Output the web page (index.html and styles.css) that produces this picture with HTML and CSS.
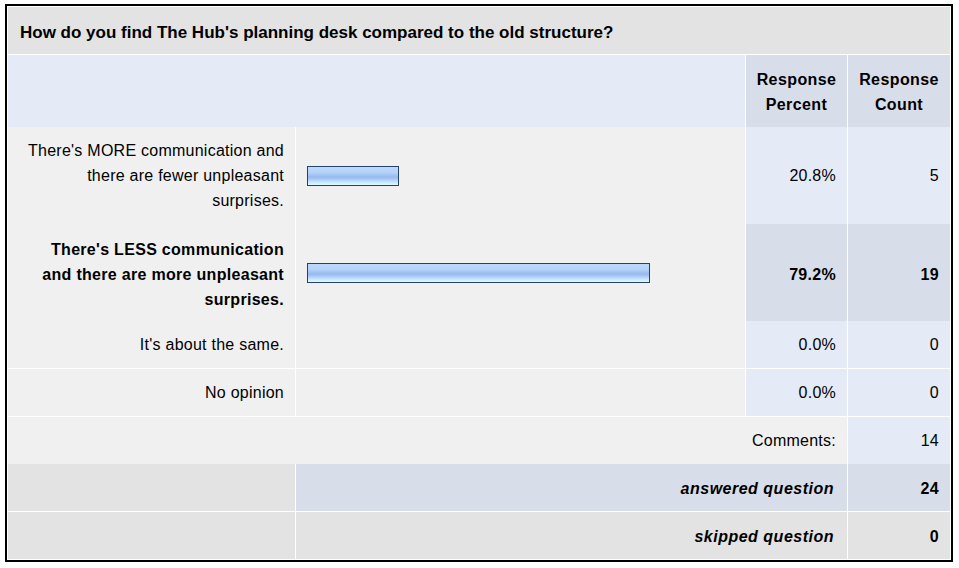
FILE: index.html
```html
<!DOCTYPE html>
<html>
<head>
<meta charset="utf-8">
<link rel="stylesheet" href="styles.css">
</head>
<body>
<div class="survey">
  <div class="title">How do you find The Hub's planning desk compared to the old structure?</div>
  <div class="row sep">
    <div class="cell span2 blue"></div>
    <div class="cell hcol dark">Response Percent</div>
    <div class="cell hcol dark">Response Count</div>
  </div>
  <div class="row">
    <div class="cell label">There's MORE communication and there are fewer unpleasant surprises.</div>
    <div class="cell barcell"><div class="bar" style="width:92px"></div></div>
    <div class="cell num blue">20.8%</div>
    <div class="cell num blue">5</div>
  </div>
  <div class="row strong">
    <div class="cell label">There's LESS communication and there are more unpleasant surprises.</div>
    <div class="cell barcell"><div class="bar" style="width:343px"></div></div>
    <div class="cell num dark">79.2%</div>
    <div class="cell num dark">19</div>
  </div>
  <div class="row">
    <div class="cell label">It's about the same.</div>
    <div class="cell barcell"></div>
    <div class="cell num blue">0.0%</div>
    <div class="cell num blue">0</div>
  </div>
  <div class="row sep">
    <div class="cell label">No opinion</div>
    <div class="cell barcell"></div>
    <div class="cell num blue">0.0%</div>
    <div class="cell num blue">0</div>
  </div>
  <div class="row sep">
    <div class="cell span3 num light">Comments:</div>
    <div class="cell num blue">14</div>
  </div>
  <div class="row low">
    <div class="cell grey"></div>
    <div class="cell span2 num dark summary">answered question</div>
    <div class="cell num dark bold">24</div>
  </div>
  <div class="row sep low">
    <div class="cell grey"></div>
    <div class="cell span2 num grey summary">skipped question</div>
    <div class="cell num grey bold">0</div>
  </div>
</div>
</body>
</html>
```

FILE: styles.css
```css
html, body {
  margin: 0;
  padding: 0;
  background: #ffffff;
}

body {
  font-family: "Liberation Sans", Arial, sans-serif;
  font-size: 16px;
  line-height: 25px;
  color: #000000;
  letter-spacing: 0.25px;
}

.survey {
  width: 942px;
  margin: 4px 0 0 5px;
  border: 2px solid #000000;
  padding: 1px;
  background: #ffffff;
  display: flex;
  flex-direction: column;
}

.title {
  background: #e3e3e3;
  font-size: 17px;
  font-weight: bold;
  letter-spacing: 0;
  padding: 13px 12px 9px;
  height: 25px;
}

.row {
  display: grid;
  grid-template-columns: 287px 449px 101px 102px;
  column-gap: 1px;
  background: #ffffff;
}

.row.sep {
  margin-top: 1px;
}

.cell {
  padding: 11px 11px;
}

.span2 {
  grid-column: span 2;
}

.span3 {
  grid-column: span 3;
}

.blue {
  background: #e5ebf6;
}

.dark {
  background: #d8dee9;
}

.light {
  background: #f0f0f0;
}

.grey {
  background: #e3e3e3;
}

.hcol {
  font-weight: bold;
  text-align: center;
  letter-spacing: 0.4px;
  padding: 12px 8px 10px;
}

.label {
  background: #f0f0f0;
  text-align: right;
  padding-left: 16px;
}

.strong .label,
.strong .num,
.bold {
  font-weight: bold;
  letter-spacing: 0.3px;
}

.strong .cell {
  padding-top: 13px;
  padding-bottom: 9px;
}

.low .cell {
  padding-top: 12px;
  padding-bottom: 10px;
}

.barcell {
  background: #f0f0f0;
  display: flex;
  align-items: center;
}

.bar {
  box-sizing: border-box;
  height: 20px;
  border: 1px solid #26426b;
  background: linear-gradient(to bottom,
    #bdd9fc 0%,
    #b5d2fa 30%,
    #9fc0f1 48%,
    #97b9ee 56%,
    #a9c9f6 68%,
    #c4e3fd 82%,
    #dcfbff 100%);
}

.num {
  display: flex;
  align-items: center;
  justify-content: flex-end;
  text-align: right;
}

.strong .barcell {
  padding-top: 11px;
  padding-bottom: 11px;
}

.summary {
  font-weight: bold;
  font-style: italic;
  letter-spacing: 0.5px;
  padding-right: 13px;
}
```
